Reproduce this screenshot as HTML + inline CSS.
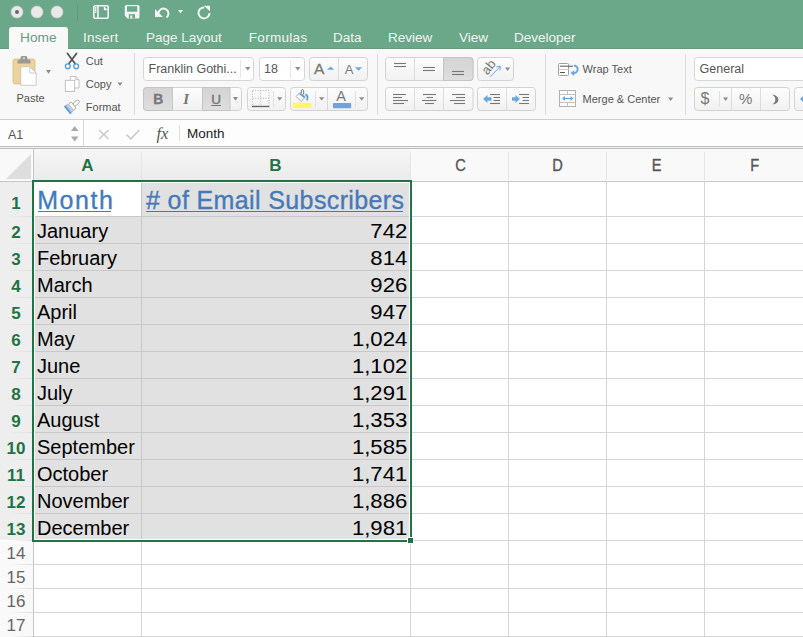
<!DOCTYPE html>
<html><head><meta charset="utf-8">
<style>
*{margin:0;padding:0;box-sizing:border-box}
html,body{width:803px;height:637px;overflow:hidden;background:#fff;font-family:"Liberation Sans",sans-serif;position:relative}
.a{position:absolute}
#colhdr{position:absolute;left:0;top:149px;width:803px;height:32px;background:#f9f9f9}
#colsel{position:absolute;left:34px;top:149px;width:377px;height:31px;background:linear-gradient(#f6f6f6,#ebebeb)}
#rowsel{position:absolute;left:0;top:182px;width:33px;height:358px;background:#eeeeee}
#rowun{position:absolute;left:0;top:541px;width:33px;height:96px;background:#f9f9f9}
.hl{position:absolute;left:33px;width:770px;height:1px;background:#d6d6d6}
.hli{position:absolute;left:33px;width:378px;height:1px;background:#c8c8c8}
.rhl{position:absolute;left:0;width:33px;height:1px;background:linear-gradient(90deg,rgba(220,220,220,0) 0,rgba(220,220,220,0) 30%,#dedede 100%)}
.vl{position:absolute;top:181px;height:456px;width:1px;background:#d6d6d6}
.vli{position:absolute;top:181px;height:360px;width:1px;background:#c8c8c8}
.chv{position:absolute;top:152px;height:29px;width:1px;background:#e6e6e6}
.hdrline{position:absolute;left:0;top:181px;width:803px;height:1px;background:#c6c6c6}
.hdrhl{position:absolute;left:0;top:180px;width:803px;height:1px;background:#fbfbfb}
.rhv{position:absolute;left:33px;top:149px;width:1px;height:488px;background:#c6c6c6}
.rhvhl{position:absolute;left:32px;top:149px;width:1px;height:32px;background:#fbfbfb}
#corner{position:absolute;left:0;top:149px}
#sel{position:absolute;left:32px;top:180px;width:380px;height:362px;border:2px solid #217346}
#selfill{position:absolute;left:35px;top:183px;width:374px;height:356px;background:#e1e1e1}
#inner{position:absolute;left:34px;top:182px;width:376px;height:358px;border:1px solid #fff}
#a1{position:absolute;left:34px;top:182px;width:107px;height:34px;background:#fff}
#handle{position:absolute;left:408px;top:538px;width:5px;height:5px;background:#217346;box-shadow:0 0 0 1px #fff}
.hdrtxt{position:absolute;font-size:25px;line-height:25px;color:#4a7fc0;white-space:nowrap;text-decoration:underline}
</style></head><body>
<svg class="a" style="left:0;top:0" width="803" height="149" viewBox="0 0 803 149" font-family="Liberation Sans, sans-serif">
<defs>
<linearGradient id="btn" x1="0" y1="0" x2="0" y2="1"><stop offset="0" stop-color="#fdfdfd"/><stop offset="1" stop-color="#f1f1f1"/></linearGradient>
<linearGradient id="prs" x1="0" y1="0" x2="0" y2="1"><stop offset="0" stop-color="#d4d4d4"/><stop offset="1" stop-color="#dedede"/></linearGradient>
</defs>
<!-- title bar -->
<rect x="0" y="0" width="803" height="49" fill="#6aa889"/>
<rect x="0" y="48" width="803" height="1" fill="#5f9d7c"/>
<circle cx="17" cy="12" r="6" fill="#e9e9e9" stroke="#d2d2d2" stroke-width="0.6"/>
<circle cx="17" cy="12" r="2" fill="#666"/>
<circle cx="37" cy="12" r="6" fill="#e9e9e9" stroke="#d2d2d2" stroke-width="0.6"/>
<circle cx="57" cy="12" r="6" fill="#e9e9e9" stroke="#d2d2d2" stroke-width="0.6"/>
<line x1="77.5" y1="4" x2="77.5" y2="21" stroke="#5f9b79" stroke-width="1"/>
<!-- QAT -->
<g fill="none" stroke="#f4f4f4" stroke-width="1.6">
<rect x="93.8" y="5.8" width="14.4" height="12.4" rx="1.2"/>
<line x1="98" y1="6" x2="98" y2="18"/>
</g>
<path d="M103.8 6 V10.3 H108 Z" fill="#f4f4f4"/>
<circle cx="95.7" cy="7.9" r="0.9" fill="#f4f4f4"/><circle cx="95.7" cy="10" r="0.9" fill="#f4f4f4"/><circle cx="95.7" cy="12.1" r="0.9" fill="#f4f4f4"/>
<path d="M126.2 5 H138 Q139.5 5 139.5 6.5 V17 Q139.5 18.5 138 18.5 H127.5 L124.8 15.8 V6.5 Q124.8 5 126.2 5 Z" fill="#f4f4f4"/>
<rect x="127" y="6.2" width="10.2" height="5.5" fill="#6aa889"/>
<rect x="128.8" y="14.2" width="6.2" height="4.3" fill="#6aa889"/>
<rect x="130.3" y="15.5" width="2" height="3" fill="#f4f4f4"/>
<path d="M155 9 V17 H163 Z" fill="#f4f4f4"/>
<path d="M158.5 13.5 A5 5 0 1 1 166.5 17.5" fill="none" stroke="#f4f4f4" stroke-width="2"/>
<path d="M178 10 H183 L180.5 13.6 Z" fill="#f4f4f4"/>
<path d="M204.3 7.4 A5.5 5.5 0 1 0 209.5 13" fill="none" stroke="#f4f4f4" stroke-width="2"/>
<path d="M203.8 5.8 H210 V11.2 Z" fill="#f4f4f4"/>
<!-- tabs -->
<path d="M9 48.5 V30 Q9 27 12 27 H65 Q68 27 68 30 V48.5 Z" fill="#f8f8f8"/>
<g font-size="13.5" fill="#f1f5f2">
<text x="20" y="42" fill="#6c9b80" font-size="13.7">Home</text>
<text x="83" y="42" letter-spacing="0.3">Insert</text>
<text x="146" y="42">Page Layout</text>
<text x="248.8" y="42" letter-spacing="0.3">Formulas</text>
<text x="333" y="42">Data</text>
<text x="388" y="42">Review</text>
<text x="459" y="42">View</text>
<text x="514" y="42">Developer</text>
</g>
<!-- ribbon body -->
<rect x="0" y="49" width="803" height="70" fill="#f8f8f8"/>
<rect x="0" y="49" width="803" height="1" fill="#fcfcfc"/>
<rect x="9" y="48" width="59" height="2" fill="#f8f8f8"/>
<rect x="0" y="119" width="803" height="1" fill="#d0d0d0"/>
<!-- separators -->
<g stroke="#dcdcdc" stroke-width="1">
<line x1="134.5" y1="53" x2="134.5" y2="115"/>
<line x1="377.5" y1="54" x2="377.5" y2="115"/>
<line x1="545.5" y1="54" x2="545.5" y2="115"/>
<line x1="685.5" y1="54" x2="685.5" y2="115"/>
</g>
<!-- clipboard -->
<rect x="13" y="59" width="22" height="25" rx="2" fill="#ebd39d" stroke="#dcbf80" stroke-width="0.8"/>
<path d="M17.5 63.5 V61 Q17.5 59.5 19 59.5 H20.5 V57.5 Q20.5 56 22 56 H25.8 Q27.3 56 27.3 57.5 V59.5 H29 Q30.5 59.5 30.5 61 V63.5 Z" fill="#9a9a9a"/>
<rect x="23" y="57.3" width="2" height="1.8" fill="#ebd39d"/>
<path d="M20.8 66.8 H29.8 L36.2 73 V85.3 H20.8 Z" fill="#fff" stroke="#c6c6c6" stroke-width="0.9"/>
<path d="M29.8 66.8 V73 H36.2" fill="none" stroke="#c6c6c6" stroke-width="0.9"/>
<path d="M46 70 H51 L48.5 73.8 Z" fill="#8c8c8c"/>
<g font-size="11" fill="#555">
<text x="16.5" y="101.8">Paste</text>
<text x="85.8" y="65.2">Cut</text>
<text x="85.8" y="88.4">Copy</text>
<text x="85.8" y="111.2">Format</text>
</g>
<path d="M117.5 82.5 H122.5 L120 86 Z" fill="#8c8c8c"/>
<!-- scissors -->
<g stroke="#555" stroke-width="1.8" fill="none" stroke-linecap="round">
<line x1="67.5" y1="53.5" x2="75" y2="63.5"/>
<line x1="76.5" y1="53.5" x2="69" y2="63.5"/>
</g>
<g stroke="#5b9fdf" stroke-width="1.4" fill="none">
<circle cx="67.8" cy="66.3" r="2.4"/>
<circle cx="76.2" cy="66.3" r="2.4"/>
</g>
<!-- copy -->
<path d="M70.3 76.5 H75.8 L79 79.7 V88 H70.3 Z" fill="#fff" stroke="#bcbcbc" stroke-width="0.9"/>
<path d="M75.8 76.5 V79.7 H79" fill="none" stroke="#bcbcbc" stroke-width="0.9"/>
<rect x="65.3" y="80.3" width="9.4" height="11.2" fill="#fff" stroke="#bcbcbc" stroke-width="0.9"/>
<!-- brush -->
<g transform="translate(67.4 110.1) rotate(-39)">
<rect x="7.6" y="-1.8" width="7.2" height="3.6" rx="1.8" fill="#fff" stroke="#9c9c9c" stroke-width="0.8"/>
<rect x="4.5" y="-4" width="3.6" height="8" rx="0.8" fill="#fafafa" stroke="#9c9c9c" stroke-width="0.8"/>
<path d="M0 -4.8 L4.5 -4.1 V4.1 L0 4.8 Z" fill="#d9d9d9" stroke="#a8a8a8" stroke-width="0.6"/>
<path d="M0.6 -4.9 V4.9" stroke="#5aa0e0" stroke-width="2.2"/>
<path d="M2.2 -4.5 V4.5" stroke="#9cc6ee" stroke-width="1.4"/>
</g>
<!-- font name box -->
<rect x="143.5" y="57.5" width="110" height="23" rx="3" fill="#fff" stroke="#d6d6d6"/>
<line x1="240.5" y1="60" x2="240.5" y2="78" stroke="#e6e6e6"/>
<path d="M245 67 H250.5 L247.8 70.6 Z" fill="#8c8c8c"/>
<text x="148.5" y="73.3" font-size="12.5" fill="#555">Franklin Gothi...</text>
<rect x="259.5" y="57.5" width="45" height="23" rx="3" fill="#fff" stroke="#d6d6d6"/>
<line x1="290.5" y1="60" x2="290.5" y2="78" stroke="#e6e6e6"/>
<path d="M295 67 H300.5 L297.8 70.6 Z" fill="#8c8c8c"/>
<text x="264" y="73.3" font-size="12.5" fill="#555">18</text>
<!-- grow/shrink -->
<rect x="309.5" y="57.5" width="58" height="23" rx="3" fill="url(#btn)" stroke="#d3d3d3"/>
<line x1="338.5" y1="58" x2="338.5" y2="80" stroke="#dcdcdc"/>
<text x="314" y="74.3" font-size="15.5" fill="#777" stroke="#777" stroke-width="0.3">A</text>
<path d="M327 69.8 H334.2 L330.6 66.6 Z" fill="#6aa7de"/>
<text x="344.8" y="74.2" font-size="13" fill="#777">A</text>
<path d="M355 67.2 H362.2 L358.6 70.8 Z" fill="#6aa7de"/>
<!-- B I U -->
<rect x="143.5" y="87.5" width="98" height="23" rx="3" fill="url(#btn)" stroke="#d3d3d3"/>
<path d="M146.5 87.5 H172.5 V110.5 H146.5 Q143.5 110.5 143.5 107.5 V90.5 Q143.5 87.5 146.5 87.5 Z" fill="url(#prs)" stroke="#c4c4c4"/>
<rect x="202.5" y="87.5" width="27.5" height="23" fill="url(#prs)" stroke="#c4c4c4"/>
<line x1="172.5" y1="88" x2="172.5" y2="110" stroke="#c8c8c8"/>
<text x="153.3" y="104" font-size="13.8" font-weight="bold" fill="#777" stroke="#777" stroke-width="0.3">B</text>
<text x="183.2" y="103.8" font-size="15" font-style="italic" font-weight="bold" font-family="Liberation Serif, serif" fill="#777">I</text>
<text x="211.3" y="104" font-size="13.5" fill="#777" stroke="#777" stroke-width="0.45">U</text>
<line x1="211.3" y1="105.5" x2="221" y2="105.5" stroke="#777" stroke-width="1"/>
<path d="M233 97 H238 L235.5 100.7 Z" fill="#8c8c8c"/>
<!-- borders -->
<rect x="247.5" y="87.5" width="38" height="23" rx="3" fill="url(#btn)" stroke="#d3d3d3"/>
<line x1="273.5" y1="91" x2="273.5" y2="107" stroke="#e2e2e2"/>
<path d="M277 97.2 H282.4 L279.7 100.5 Z" fill="#8c8c8c"/>
<g stroke="#b0b0b0" stroke-width="0.9" stroke-dasharray="1 1.6" fill="none">
<rect x="252.5" y="90.5" width="16.5" height="15.5"/>
<line x1="260.7" y1="90.5" x2="260.7" y2="106"/>
<line x1="252.5" y1="98.2" x2="269" y2="98.2"/>
</g>
<line x1="252" y1="106.5" x2="269.3" y2="106.5" stroke="#666" stroke-width="1.3"/>
<!-- fill / font color -->
<rect x="290.5" y="87.5" width="77" height="23" rx="3" fill="url(#btn)" stroke="#d3d3d3"/>
<line x1="315.5" y1="91" x2="315.5" y2="107" stroke="#e2e2e2"/>
<line x1="327.5" y1="88" x2="327.5" y2="110" stroke="#d8d8d8"/>
<line x1="355.5" y1="91" x2="355.5" y2="107" stroke="#e2e2e2"/>
<path d="M319 97.2 H324.4 L321.7 100.5 Z" fill="#8c8c8c"/>
<path d="M359 97.2 H364.4 L361.7 100.5 Z" fill="#8c8c8c"/>
<rect x="293" y="102.7" width="18.2" height="5.4" fill="#fdf56b"/>
<rect x="333" y="103" width="18.2" height="5.2" rx="0.8" fill="#72a2dc"/>
<text x="336.3" y="101" font-size="14.5" fill="#777">A</text>
<path d="M300 92.5 L305.3 97 L301.2 101.5 L296.2 96.5 Z" fill="#fff" stroke="#9a9a9a" stroke-width="0.9" stroke-linejoin="round"/>
<line x1="299.6" y1="93.6" x2="304.6" y2="97.6" stroke="#5aa0e0" stroke-width="1.6"/>
<path d="M301.3 93 Q300.9 89.3 302.7 89.4 Q304.2 89.6 303.7 94.6" fill="none" stroke="#777" stroke-width="1"/>
<path d="M305.4 94.3 Q308.6 95.6 307 100.4" fill="none" stroke="#5aa0e0" stroke-width="1.8"/>
<!-- alignment top -->
<rect x="385.5" y="57.5" width="87.5" height="23" rx="3" fill="url(#btn)" stroke="#d3d3d3"/>
<path d="M443.5 57.5 H470 Q473 57.5 473 60.5 V77.5 Q473 80.5 470 80.5 H443.5 Z" fill="url(#prs)" stroke="#c4c4c4"/>
<line x1="414.5" y1="58" x2="414.5" y2="80" stroke="#dcdcdc"/>
<g stroke="#777" stroke-width="1.1">
<line x1="394" y1="63.5" x2="406" y2="63.5"/><line x1="394" y1="66.5" x2="406" y2="66.5"/>
<line x1="423" y1="67.5" x2="435" y2="67.5"/><line x1="423" y1="70.5" x2="435" y2="70.5"/>
<line x1="452" y1="71.5" x2="464" y2="71.5"/><line x1="452" y1="74.5" x2="464" y2="74.5"/>
</g>
<!-- orientation -->
<rect x="477.5" y="57.5" width="36" height="23" rx="3" fill="url(#btn)" stroke="#d3d3d3"/>
<text x="0" y="0" font-size="13" fill="#777" transform="translate(487.5 75.5) rotate(-52)">ab</text>
<line x1="490" y1="76.8" x2="500" y2="66.8" stroke="#5aa0e0" stroke-width="0.9"/>
<path d="M496.3 66.9 L500.3 66.5 L499.9 70.5" fill="none" stroke="#5aa0e0" stroke-width="0.9"/>
<path d="M505 67.6 H510.2 L507.6 71 Z" fill="#8c8c8c"/>
<!-- alignment bottom -->
<rect x="385.5" y="87.5" width="87.5" height="23" rx="3" fill="url(#btn)" stroke="#d3d3d3"/>
<line x1="414.5" y1="88" x2="414.5" y2="110" stroke="#dcdcdc"/>
<line x1="443.5" y1="88" x2="443.5" y2="110" stroke="#dcdcdc"/>
<g stroke="#777" stroke-width="1.1">
<line x1="393" y1="94.5" x2="406" y2="94.5"/><line x1="393" y1="97.5" x2="402" y2="97.5"/><line x1="393" y1="100.5" x2="408" y2="100.5"/><line x1="393" y1="103.5" x2="404" y2="103.5"/>
<line x1="423" y1="94.5" x2="436" y2="94.5"/><line x1="426.5" y1="97.5" x2="433" y2="97.5"/><line x1="422" y1="100.5" x2="436.5" y2="100.5"/><line x1="425" y1="103.5" x2="434" y2="103.5"/>
<line x1="452" y1="94.5" x2="465" y2="94.5"/><line x1="456" y1="97.5" x2="465" y2="97.5"/><line x1="450" y1="100.5" x2="465" y2="100.5"/><line x1="454" y1="103.5" x2="465" y2="103.5"/>
</g>
<!-- indent -->
<rect x="477.5" y="87.5" width="58" height="23" rx="3" fill="url(#btn)" stroke="#d3d3d3"/>
<line x1="506.5" y1="88" x2="506.5" y2="110" stroke="#dcdcdc"/>
<g stroke="#777" stroke-width="1.1">
<line x1="490" y1="94.5" x2="500" y2="94.5"/><line x1="493.5" y1="97.5" x2="500" y2="97.5"/><line x1="493.5" y1="100.5" x2="500" y2="100.5"/><line x1="490" y1="103.5" x2="500" y2="103.5"/>
<line x1="519" y1="94.5" x2="529" y2="94.5"/><line x1="522.5" y1="97.5" x2="529" y2="97.5"/><line x1="522.5" y1="100.5" x2="529" y2="100.5"/><line x1="519" y1="103.5" x2="529" y2="103.5"/>
</g>
<path d="M483 99 L487.5 95 V97.3 H491.5 V100.7 H487.5 V103 Z" fill="#6aa7de"/>
<path d="M520 99 L515.5 95 V97.3 H512 V100.7 H515.5 V103 Z" fill="#6aa7de"/>
<!-- wrap text -->
<rect x="558.5" y="63.5" width="10" height="12" rx="1" fill="#fff" stroke="#a0a0a0"/>
<line x1="558.5" y1="69.5" x2="568.5" y2="69.5" stroke="#c8c8c8"/>
<line x1="560" y1="66.2" x2="573" y2="66.2" stroke="#555" stroke-width="1"/>
<line x1="560" y1="72.5" x2="565" y2="72.5" stroke="#555" stroke-width="1"/>
<path d="M574 65.5 Q578.5 66.5 577.5 70.5 Q576.5 73 573.5 73.3" stroke="#6aa7de" stroke-width="2" fill="none"/>
<path d="M570.5 73 L574.2 70.2 V76 Z" fill="#6aa7de"/>
<text x="582.6" y="73.4" font-size="11" fill="#555">Wrap Text</text>
<!-- merge -->
<rect x="559.5" y="90.5" width="16" height="16" fill="#fff" stroke="#b0b0b0"/>
<line x1="559.5" y1="94.5" x2="575.5" y2="94.5" stroke="#c0c0c0"/>
<line x1="559.5" y1="102.5" x2="575.5" y2="102.5" stroke="#c0c0c0"/>
<line x1="567.5" y1="90.5" x2="567.5" y2="94.5" stroke="#c0c0c0"/>
<line x1="567.5" y1="102.5" x2="567.5" y2="106.5" stroke="#c0c0c0"/>
<line x1="564" y1="98.5" x2="571" y2="98.5" stroke="#6aa7de" stroke-width="1.2"/>
<path d="M562 98.5 L565 96 V101 Z M573.5 98.5 L570.5 96 V101 Z" fill="#6aa7de"/>
<text x="582.6" y="103.2" font-size="11" fill="#555">Merge &amp; Center</text>
<path d="M668 97.6 H673.2 L670.6 100.9 Z" fill="#8c8c8c"/>
<!-- number -->
<rect x="694.5" y="57.5" width="120" height="23" rx="3" fill="#fff" stroke="#d6d6d6"/>
<text x="699.6" y="72.8" font-size="12.5" fill="#555">General</text>
<rect x="694.5" y="87.5" width="95" height="23" rx="3" fill="url(#btn)" stroke="#d3d3d3"/>
<line x1="719.5" y1="91" x2="719.5" y2="107" stroke="#e2e2e2"/>
<line x1="731.5" y1="88" x2="731.5" y2="110" stroke="#dcdcdc"/>
<line x1="760.5" y1="88" x2="760.5" y2="110" stroke="#dcdcdc"/>
<text x="700.5" y="104.3" font-size="16" fill="#777">$</text>
<path d="M723 97.6 H728.2 L725.6 100.9 Z" fill="#8c8c8c"/>
<text x="739" y="104.4" font-size="15" fill="#777">%</text>
<path d="M772.2 94.6 Q778.6 96 778.3 100 Q778 103.6 772.6 104.6 Q775.6 102.2 775.4 99.6 Q775.2 96.6 772.2 94.6 Z" fill="#777"/>
<rect x="794.5" y="87.5" width="30" height="23" rx="3" fill="url(#btn)" stroke="#d3d3d3"/>
<path d="M800 99 L803 96 V102 Z" fill="#6aa7de"/>
<!-- formula bar -->
<rect x="0" y="120" width="803" height="26" fill="#fdfdfd"/>
<text x="8" y="138.5" font-size="12.5" fill="#555">A1</text>
<path d="M71 131 H78.5 L74.75 126 Z M71 136.5 H78.5 L74.75 141.5 Z" fill="#a8a8a8"/>
<line x1="83.5" y1="120" x2="83.5" y2="146" stroke="#d8d8d8"/>
<g stroke="#cbcbcb" stroke-width="1.6" fill="none">
<line x1="99" y1="130" x2="108.5" y2="139"/><line x1="108.5" y1="130" x2="99" y2="139"/>
<path d="M126.5 134.5 L130.8 138.8 L139.5 130"/>
</g>
<text x="156.5" y="138.5" font-size="16.5" font-style="italic" font-family="Liberation Serif, serif" fill="#555">fx</text>
<line x1="179.5" y1="125" x2="179.5" y2="141" stroke="#dedede"/>
<text x="187" y="138.3" font-size="13.5" fill="#222">Month</text>
<rect x="0" y="146" width="803" height="1" fill="#bdbdbd"/>
<rect x="0" y="147" width="803" height="1" fill="#f2f2f2"/>
<rect x="0" y="148" width="803" height="1" fill="#bdbdbd"/>
</svg>

<div id="colhdr"></div>
<div id="colsel"></div>
<div id="rowsel"></div>
<div id="rowun"></div>
<div id="selfill"></div>
<div class="hl" style="top:216px"></div>
<div class="rhl" style="top:216px"></div>
<div class="hl" style="top:243px"></div>
<div class="rhl" style="top:243px"></div>
<div class="hl" style="top:270px"></div>
<div class="rhl" style="top:270px"></div>
<div class="hl" style="top:297px"></div>
<div class="rhl" style="top:297px"></div>
<div class="hl" style="top:324px"></div>
<div class="rhl" style="top:324px"></div>
<div class="hl" style="top:351px"></div>
<div class="rhl" style="top:351px"></div>
<div class="hl" style="top:378px"></div>
<div class="rhl" style="top:378px"></div>
<div class="hl" style="top:405px"></div>
<div class="rhl" style="top:405px"></div>
<div class="hl" style="top:432px"></div>
<div class="rhl" style="top:432px"></div>
<div class="hl" style="top:459px"></div>
<div class="rhl" style="top:459px"></div>
<div class="hl" style="top:486px"></div>
<div class="rhl" style="top:486px"></div>
<div class="hl" style="top:513px"></div>
<div class="rhl" style="top:513px"></div>
<div class="hl" style="top:540px"></div>
<div class="rhl" style="top:540px"></div>
<div class="hl" style="top:564px"></div>
<div class="rhl" style="top:564px"></div>
<div class="hl" style="top:588px"></div>
<div class="rhl" style="top:588px"></div>
<div class="hl" style="top:612px"></div>
<div class="rhl" style="top:612px"></div>
<div class="hl" style="top:636px"></div>
<div class="rhl" style="top:636px"></div>
<div class="vl" style="left:141px"></div>
<div class="chv" style="left:141px"></div>
<div class="vl" style="left:410px"></div>
<div class="chv" style="left:410px"></div>
<div class="vl" style="left:508px"></div>
<div class="chv" style="left:508px"></div>
<div class="vl" style="left:606px"></div>
<div class="chv" style="left:606px"></div>
<div class="vl" style="left:704px"></div>
<div class="chv" style="left:704px"></div>
<div class="hli" style="top:216px"></div>
<div class="hli" style="top:243px"></div>
<div class="hli" style="top:270px"></div>
<div class="hli" style="top:297px"></div>
<div class="hli" style="top:324px"></div>
<div class="hli" style="top:351px"></div>
<div class="hli" style="top:378px"></div>
<div class="hli" style="top:405px"></div>
<div class="hli" style="top:432px"></div>
<div class="hli" style="top:459px"></div>
<div class="hli" style="top:486px"></div>
<div class="hli" style="top:513px"></div>
<div class="vli" style="left:141px"></div>
<div id="inner"></div>
<div id="a1"></div>
<div class="hdrhl"></div>
<div class="hdrline"></div>
<div class="rhvhl"></div>
<div class="rhv"></div>
<svg id="corner" width="33" height="32"><path d="M31 5 V30 H6 Z" fill="#dedede"/></svg>
<div id="sel"></div>
<div id="handle"></div>
<svg class="a" style="left:0;top:0" width="803" height="637" font-family="Liberation Sans, sans-serif">
<text x="37" y="238" font-size="20">January</text>
<text transform="translate(407.3 238) scale(1.08 1)" text-anchor="end" font-size="20.5">742</text>
<text x="37" y="265" font-size="20">February</text>
<text transform="translate(407.3 265) scale(1.08 1)" text-anchor="end" font-size="20.5">814</text>
<text x="37" y="292" font-size="20">March</text>
<text transform="translate(407.3 292) scale(1.08 1)" text-anchor="end" font-size="20.5">926</text>
<text x="37" y="319" font-size="20">April</text>
<text transform="translate(407.3 319) scale(1.08 1)" text-anchor="end" font-size="20.5">947</text>
<text x="37" y="346" font-size="20">May</text>
<text transform="translate(407.3 346) scale(1.08 1)" text-anchor="end" font-size="20.5">1,024</text>
<text x="37" y="373" font-size="20">June</text>
<text transform="translate(407.3 373) scale(1.08 1)" text-anchor="end" font-size="20.5">1,102</text>
<text x="37" y="400" font-size="20">July</text>
<text transform="translate(407.3 400) scale(1.08 1)" text-anchor="end" font-size="20.5">1,291</text>
<text x="37" y="427" font-size="20">August</text>
<text transform="translate(407.3 427) scale(1.08 1)" text-anchor="end" font-size="20.5">1,353</text>
<text x="37" y="454" font-size="20">September</text>
<text transform="translate(407.3 454) scale(1.08 1)" text-anchor="end" font-size="20.5">1,585</text>
<text x="37" y="481" font-size="20">October</text>
<text transform="translate(407.3 481) scale(1.08 1)" text-anchor="end" font-size="20.5">1,741</text>
<text x="37" y="508" font-size="20">November</text>
<text transform="translate(407.3 508) scale(1.08 1)" text-anchor="end" font-size="20.5">1,886</text>
<text x="37" y="535" font-size="20">December</text>
<text transform="translate(407.3 535) scale(1.08 1)" text-anchor="end" font-size="20.5">1,981</text>
<text x="16" y="209" text-anchor="middle" font-size="17" font-weight="bold" fill="#217346">1</text>
<text x="16" y="238" text-anchor="middle" font-size="17" font-weight="bold" fill="#217346">2</text>
<text x="16" y="265" text-anchor="middle" font-size="17" font-weight="bold" fill="#217346">3</text>
<text x="16" y="292" text-anchor="middle" font-size="17" font-weight="bold" fill="#217346">4</text>
<text x="16" y="319" text-anchor="middle" font-size="17" font-weight="bold" fill="#217346">5</text>
<text x="16" y="346" text-anchor="middle" font-size="17" font-weight="bold" fill="#217346">6</text>
<text x="16" y="373" text-anchor="middle" font-size="17" font-weight="bold" fill="#217346">7</text>
<text x="16" y="400" text-anchor="middle" font-size="17" font-weight="bold" fill="#217346">8</text>
<text x="16" y="427" text-anchor="middle" font-size="17" font-weight="bold" fill="#217346">9</text>
<text x="16" y="454" text-anchor="middle" font-size="17" font-weight="bold" fill="#217346">10</text>
<text x="16" y="481" text-anchor="middle" font-size="17" font-weight="bold" fill="#217346">11</text>
<text x="16" y="508" text-anchor="middle" font-size="17" font-weight="bold" fill="#217346">12</text>
<text x="16" y="535" text-anchor="middle" font-size="17" font-weight="bold" fill="#217346">13</text>
<text x="16" y="559" text-anchor="middle" font-size="17" fill="#666">14</text>
<text x="16" y="583" text-anchor="middle" font-size="17" fill="#666">15</text>
<text x="16" y="607" text-anchor="middle" font-size="17" fill="#666">16</text>
<text x="16" y="631" text-anchor="middle" font-size="17" fill="#666">17</text>
<text x="87.5" y="171" text-anchor="middle" font-size="17" font-weight="bold" fill="#217346">A</text>
<text x="275.5" y="171" text-anchor="middle" font-size="17" font-weight="bold" fill="#217346">B</text>
<text transform="translate(460.5 171) scale(0.86 1)" text-anchor="middle" font-size="17" fill="#555" stroke="#555" stroke-width="0.35">C</text>
<text transform="translate(557.5 171) scale(0.86 1)" text-anchor="middle" font-size="17" fill="#555" stroke="#555" stroke-width="0.35">D</text>
<text transform="translate(656.5 171) scale(0.86 1)" text-anchor="middle" font-size="17" fill="#555" stroke="#555" stroke-width="0.35">E</text>
<text transform="translate(754.7 171) scale(0.86 1)" text-anchor="middle" font-size="17" fill="#555" stroke="#555" stroke-width="0.35">F</text>
<text x="37.3" y="209" font-size="25" letter-spacing="1.5" fill="#3f7bc3" stroke="#3f7bc3" stroke-width="0.35">Month</text>
<rect x="38" y="211" width="73" height="1" fill="#3f7bc3"/>
<text x="146" y="209" font-size="25" letter-spacing="0.38" fill="#4679b8" stroke="#4679b8" stroke-width="0.35">#&#160;of Email Subscribers</text>
<rect x="146" y="211" width="257" height="1" fill="#4679b8"/>
</svg>
</body></html>
